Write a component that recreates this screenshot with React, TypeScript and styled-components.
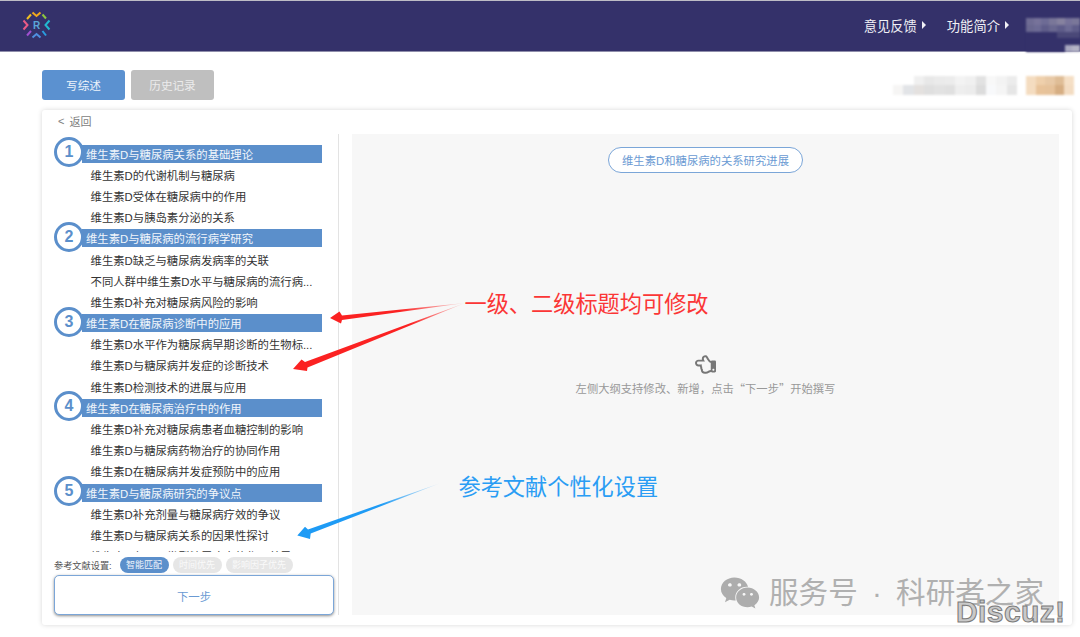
import React from 'react';
import styled, { createGlobalStyle } from 'styled-components';
import { FaRegHandPointLeft, FaWeixin } from 'react-icons/fa';

const GlobalStyle = createGlobalStyle`
  html, body {
    margin: 0;
    padding: 0;
    height: 637px;
    overflow: hidden;
    background: #fff;
    font-family: "Liberation Sans", "Noto Sans CJK SC", sans-serif;
  }
  * {
    box-sizing: border-box;
  }
`;

const Page = styled.div`
  position: relative;
  width: 1080px;
  height: 637px;
  overflow: hidden;
  background: #fff;
`;

const Header = styled.header`
  display: flex;
  align-items: center;
  height: 52px;
  padding: 0 0 2px 16px;
  background: #34316a;
  border-top: 1px solid #bdbcc6;
  border-bottom: 1px solid #8f8eab;
`;

const Nav = styled.nav`
  display: flex;
  align-items: center;
  gap: 21px;
  margin-left: auto;
  margin-right: 17px;
`;

const NavItem = styled.span`
  display: flex;
  align-items: center;
  gap: 5px;
  color: #f1f1f6;
  font-size: 13.3px;
`;

const Caret = styled.i`
  width: 0;
  height: 0;
  border-left: 4px solid #f1f1f6;
  border-top: 4px solid transparent;
  border-bottom: 4px solid transparent;
`;

const NavSpacer = styled.div`
  flex: none;
  width: 54px;
`;

const Mosaic = styled.div<{ $cols: number; $w: number; $h: number }>`
  display: grid;
  grid-template-columns: repeat(${(p) => p.$cols}, 1fr);
  width: ${(p) => p.$w}px;
  height: ${(p) => p.$h}px;
  filter: blur(1px);
`;

const Cell = styled.div<{ $c: string }>`
  background: ${(p) => p.$c};
`;

const UserBlur = styled.div`
  position: absolute;
  right: 0;
  top: 18px;
`;

const TopRow = styled.div`
  display: flex;
  align-items: center;
  gap: 6px;
  height: 30px;
  margin: 18px 6px 10px 42px;
`;

const TabButton = styled.button<{ $active?: boolean }>`
  width: 83px;
  height: 30px;
  border: 0;
  border-radius: 3px;
  padding: 0;
  font: inherit;
  font-size: 11.6px;
  color: ${(p) => (p.$active ? '#eef4fb' : '#ececec')};
  background: ${(p) => (p.$active ? '#5b91d0' : '#bfbfbf')};
`;

const TopBlurs = styled.div`
  display: flex;
  align-items: center;
  gap: 9px;
  margin-left: auto;
`;

const Card = styled.main`
  display: flex;
  flex-direction: column;
  width: 1030px;
  height: 515px;
  margin-left: 42px;
  background: #fff;
  border-radius: 3px;
  box-shadow: 0 0 5px rgba(0, 0, 0, 0.16);
`;

const BackLink = styled.div`
  display: flex;
  align-items: center;
  gap: 5px;
  height: 24px;
  padding: 0 0 3px 16px;
  color: #7d7d7d;
  font-size: 11px;
`;

const CardBody = styled.div`
  display: flex;
  gap: 13px;
  height: 481px;
`;

const LeftColumn = styled.section`
  display: flex;
  flex-direction: column;
  width: 297px;
  padding: 0 4px 0 12px;
  border-right: 1px solid #e3e3e3;
`;

const Outline = styled.div`
  display: flex;
  flex-direction: column;
  height: 420px;
  padding-top: 9px;
  overflow: hidden;
`;

const SectionRow = styled.div`
  position: relative;
  flex: none;
  display: flex;
  align-items: center;
  height: 21.19px;
  padding-left: 28px;
`;

const SectionBar = styled.div`
  display: flex;
  align-items: center;
  width: 240px;
  height: 18px;
  padding-left: 4px;
  background: #5b8fcb;
  color: #f2f6fb;
  font-size: 11.35px;
  white-space: nowrap;
`;

const NumberBadge = styled.span`
  position: absolute;
  left: 0;
  top: -6px;
  display: flex;
  align-items: center;
  justify-content: center;
  width: 30px;
  height: 30px;
  border: 3px solid #5b8fcb;
  border-radius: 50%;
  background: #fff;
  color: #5b8fcb;
  font-size: 16px;
  font-weight: 700;
`;

const SubRow = styled.div`
  flex: none;
  display: flex;
  align-items: center;
  height: 21.19px;
  padding-left: 36.6px;
  color: #333;
  font-size: 11.35px;
  white-space: nowrap;
`;

const SettingsRow = styled.div`
  display: flex;
  align-items: center;
  height: 23px;
  padding-top: 2px;
  color: #555;
  font-size: 9.2px;
`;

const SettingsLabel = styled.span`
  width: 65.5px;
`;

const Chips = styled.div`
  display: flex;
  gap: 4px;
`;

const Chip = styled.span<{ $active?: boolean }>`
  display: flex;
  align-items: center;
  justify-content: center;
  height: 16px;
  padding: 0 6.5px;
  border-radius: 8px;
  background: ${(p) => (p.$active ? '#5b8fcb' : '#e6e6e6')};
  color: ${(p) => (p.$active ? '#eef4fb' : '#fafafa')};
  font-size: 9px;
`;

const NextButton = styled.button`
  width: 280px;
  height: 40px;
  padding: 2px 0 0;
  border: 1px solid #7ba6d8;
  border-radius: 5px;
  background: #fff;
  box-shadow: 0 1px 3px rgba(0, 0, 0, 0.45);
  color: #6a9ad3;
  font: inherit;
  font-size: 11.4px;
`;

const RightPanel = styled.section`
  display: flex;
  flex-direction: column;
  align-items: center;
  width: 707px;
  height: 481px;
  padding-top: 13px;
  background: #f7f7f7;
`;

const TitlePill = styled.div`
  display: flex;
  align-items: center;
  justify-content: center;
  width: 195px;
  height: 26px;
  border: 1px solid #7ba6d8;
  border-radius: 13px;
  background: #fff;
  color: #6a9ad3;
  font-size: 11.35px;
`;

const HandIcon = styled(FaRegHandPointLeft)`
  width: 21px;
  height: 21px;
  margin-top: 181px;
  color: #777;
`;

const Hint = styled.div`
  margin-top: 5px;
  color: #999;
  font-family: "Noto Sans CJK SC", sans-serif;
  font-size: 11.3px;
  line-height: 16px;
`;

const ArrowLayer = styled.svg`
  position: absolute;
  left: 0;
  top: 0;
  pointer-events: none;
`;

const Annotation = styled.div<{ $x: number; $y: number; $color: string }>`
  position: absolute;
  left: ${(p) => p.$x}px;
  top: ${(p) => p.$y}px;
  color: ${(p) => p.$color};
  font-size: 22.2px;
  line-height: 30px;
  white-space: nowrap;
`;

const Watermark = styled.div`
  position: absolute;
  left: 720px;
  top: 573px;
  display: flex;
  align-items: center;
  gap: 9px;
  color: #b0b0b0;
  font-size: 29.6px;
  line-height: 40px;
  word-spacing: 6px;
  white-space: nowrap;
`;

const WechatIcon = styled(FaWeixin)`
  width: 40px;
  height: 36px;
  color: #adadad;
`;

const Discuz = styled.div`
  position: absolute;
  left: 956px;
  top: 595px;
  color: #c9c9c9;
  font-size: 30px;
  font-weight: 700;
  line-height: 34px;
  letter-spacing: 0.4px;
  -webkit-text-stroke: 1px #7a7a7a;
`;

const sections = [
  {
    title: '维生素D与糖尿病关系的基础理论',
    items: ['维生素D的代谢机制与糖尿病', '维生素D受体在糖尿病中的作用', '维生素D与胰岛素分泌的关系'],
  },
  {
    title: '维生素D与糖尿病的流行病学研究',
    items: ['维生素D缺乏与糖尿病发病率的关联', '不同人群中维生素D水平与糖尿病的流行病...', '维生素D补充对糖尿病风险的影响'],
  },
  {
    title: '维生素D在糖尿病诊断中的应用',
    items: ['维生素D水平作为糖尿病早期诊断的生物标...', '维生素D与糖尿病并发症的诊断技术', '维生素D检测技术的进展与应用'],
  },
  {
    title: '维生素D在糖尿病治疗中的作用',
    items: ['维生素D补充对糖尿病患者血糖控制的影响', '维生素D与糖尿病药物治疗的协同作用', '维生素D在糖尿病并发症预防中的应用'],
  },
  {
    title: '维生素D与糖尿病研究的争议点',
    items: ['维生素D补充剂量与糖尿病疗效的争议', '维生素D与糖尿病关系的因果性探讨', '维生素D在不同类型糖尿病中的作用差异'],
  },
];

const navy = '#34316a';
const userCells = [
  '#6f6c94', '#77739a', '#6d6b95', '#7a7799', '#86829f', '#77739a', '#7a7799',
  '#6a6890', '#6d6b95', '#5f5d8a', '#6a6890', '#5f5d8a', '#6d6b95', '#5f5d8a',
  navy, navy, navy, navy, '#4a4878', '#4a4878', '#4a4878',
  navy, navy, navy, navy, navy, navy, navy,
  navy, navy, navy, navy, navy, '#a9a8c0', '#b4b3c6',
];

const greyCells = [
  '#ffffff', '#ffffff', '#f0f0f0', '#e8e8e8', '#ebebeb', '#ececec', '#f3f3f3', '#f0f0f0', '#e2e2e2', '#f8f8f8', '#f3f3f3', '#ececec',
  '#f6f5f4', '#e2e4e7', '#e4e1df', '#dfdfdf', '#e2e2e2', '#e0e0e0', '#eeeeee', '#ececec', '#dcdcdc', '#f8f9fb', '#f5f5f5', '#e6e6e6',
];

const orangeCells = [
  '#f4dcc0', '#efd0ac', '#e8c9a6', '#dfbd96', '#f5dfc5',
  '#f4dcc0', '#e8c39a', '#e6c29a', '#d6ae83', '#f3dcc2',
];

const OutlineList = () => (
  <Outline>
    {sections.map((section, i) => (
      <React.Fragment key={section.title}>
        <SectionRow>
          <NumberBadge>{i + 1}</NumberBadge>
          <SectionBar>{section.title}</SectionBar>
        </SectionRow>
        {section.items.map((item) => (
          <SubRow key={item}>{item}</SubRow>
        ))}
      </React.Fragment>
    ))}
  </Outline>
);

// four chevrons pointing inward and four short strokes between them
const logoStrokes = [
  ['M32.5 13.5L36.5 17L40.5 13.5', '#f2a91e'],
  ['M27 20L31 15.5', '#f0c020'],
  ['M42.5 15.5L46 19.5', '#8cc63f'],
  ['M23.5 21.5L27.5 26L23.5 30.5', '#ea5a86'],
  ['M49.5 21.5L45.5 26L49.5 30.5', '#22b8d0'],
  ['M27 36.5L31 32', '#a050d0'],
  ['M46 36.5L42.5 32', '#2a9fe0'],
  ['M32.5 38.5L36.5 35L40.5 38.5', '#4f8fe0'],
];

const Logo = () => (
  <svg width="40" height="40" viewBox="16 6 40 40" fill="none">
    {logoStrokes.map(([d, c]) => (
      <path key={d} d={d} stroke={c} strokeWidth="2" />
    ))}
    <text x="36.5" y="30" textAnchor="middle" fontSize="10" fontWeight="700" fill="#5aa7d8" fontFamily="Liberation Sans">
      R
    </text>
  </svg>
);

export default function App() {
  return (
    <Page>
      <GlobalStyle />
      <Header>
        <Logo />
        <Nav>
          <NavItem>
            意见反馈
            <Caret />
          </NavItem>
          <NavItem>
            功能简介
            <Caret />
          </NavItem>
        </Nav>
        <NavSpacer />
      </Header>
      <UserBlur>
        <Mosaic $cols={7} $w={54} $h={34}>
          {userCells.map((c, i) => (
            <Cell key={i} $c={c} />
          ))}
        </Mosaic>
      </UserBlur>
      <TopRow>
        <TabButton $active>写综述</TabButton>
        <TabButton>历史记录</TabButton>
        <TopBlurs>
          <Mosaic $cols={12} $w={124} $h={19}>
            {greyCells.map((c, i) => (
              <Cell key={i} $c={c} />
            ))}
          </Mosaic>
          <Mosaic $cols={5} $w={48} $h={19}>
            {orangeCells.map((c, i) => (
              <Cell key={i} $c={c} />
            ))}
          </Mosaic>
        </TopBlurs>
      </TopRow>
      <Card>
        <BackLink>
          <span>&lt;</span>
          <span>返回</span>
        </BackLink>
        <CardBody>
          <LeftColumn>
            <OutlineList />
            <SettingsRow>
              <SettingsLabel>参考文献设置:</SettingsLabel>
              <Chips>
                <Chip $active>智能匹配</Chip>
                <Chip>时间优先</Chip>
                <Chip>影响因子优先</Chip>
              </Chips>
            </SettingsRow>
            <NextButton>下一步</NextButton>
          </LeftColumn>
          <RightPanel>
            <TitlePill>维生素D和糖尿病的关系研究进展</TitlePill>
            <HandIcon />
            <Hint>左侧大纲支持修改、新增，点击“下一步”开始撰写</Hint>
          </RightPanel>
        </CardBody>
      </Card>

      <ArrowLayer width="1080" height="637" viewBox="0 0 1080 637">
        <defs>
          <linearGradient id="redA" x1="465" y1="303" x2="400" y2="309" gradientUnits="userSpaceOnUse">
            <stop offset="0" stopColor="#fb2222" stopOpacity="0.1" />
            <stop offset="1" stopColor="#fb2222" />
          </linearGradient>
          <linearGradient id="redB" x1="465" y1="303" x2="410" y2="324" gradientUnits="userSpaceOnUse">
            <stop offset="0" stopColor="#fb2222" stopOpacity="0.1" />
            <stop offset="1" stopColor="#fb2222" />
          </linearGradient>
          <linearGradient id="blueA" x1="440" y1="483" x2="380" y2="505" gradientUnits="userSpaceOnUse">
            <stop offset="0" stopColor="#1e9bf5" stopOpacity="0.1" />
            <stop offset="1" stopColor="#1e9bf5" />
          </linearGradient>
        </defs>
        <path d="M465 303L342 315.5L339.5 311.5L330 318L341 323.5L342 320Z" fill="url(#redA)" />
        <path d="M465 303L305 362L301.5 359.5L293 369L307 371L307.5 367.5Z" fill="url(#redB)" />
        <path d="M440 483.3L308 529.5L305 526.7L297.3 535.5L310 539L310.7 533.5Z" fill="url(#blueA)" />
      </ArrowLayer>
      <Annotation $x={464.5} $y={290} $color="#fb3636">一级、二级标题均可修改</Annotation>
      <Annotation $x={458.5} $y={473} $color="#2a9df4">参考文献个性化设置</Annotation>
      <Watermark>
        <WechatIcon />
        <span>服务号 · 科研者之家</span>
      </Watermark>
      <Discuz>Discuz!</Discuz>
    </Page>
  );
}
